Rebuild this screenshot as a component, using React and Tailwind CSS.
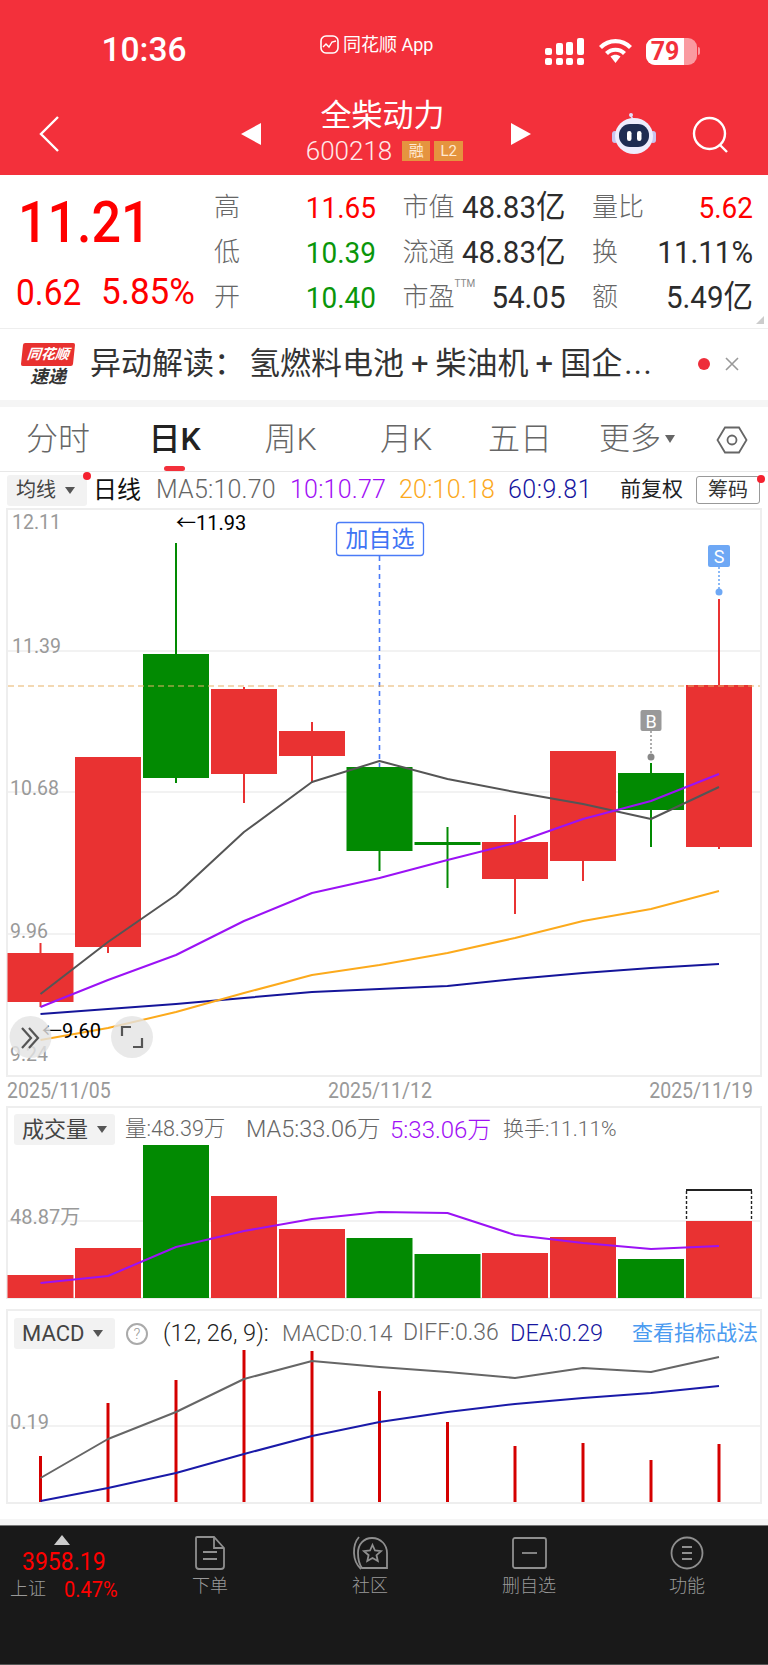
const xs = [40.5, 108, 176, 244, 312, 379.5, 447.5, 515, 583, 651, 719]
const RED = '#e93232'
const GREEN = '#028a02'

// [centro x, cuerpo arriba, cuerpo abajo, sombra arriba, sombra abajo, color]
const velas = [
  [40.5, 953, 1002, 943, 1007, RED],
  [108, 757, 947, 757, 953, RED],
  [176, 654, 778, 543, 783, GREEN],
  [244, 689, 774, 687, 803, RED],
  [312, 731, 756, 722, 783, RED],
  [379.5, 767, 851, 767, 871, GREEN],
  [447.5, 842, 845, 827, 888, GREEN],
  [515, 842, 879, 815, 914, RED],
  [583, 751, 861, 751, 881, RED],
  [651, 773, 810, 763, 847, GREEN],
  [719, 685, 847, 599, 849, RED],
]

const ma5 = [994, 942, 895, 832, 782, 761, 779, 792, 804, 819, 787]
const ma10 = [1007, 980, 955, 921, 893, 878, 860, 843, 819, 801, 774]
const ma20 = [1040, 1028, 1012, 993, 975, 965, 953, 938, 921, 909, 891]
const ma60 = [1014, 1009, 1004, 998, 992, 989, 986, 979, 973, 968, 964]

const volTops = [1275, 1248, 1145, 1196, 1229, 1238, 1254, 1253, 1237, 1259, 1221]
const volLine = [1283, 1276, 1247, 1231, 1219, 1212, 1213, 1235, 1243, 1249, 1246]

const macdTops = [1456, 1403, 1380, 1350, 1351, 1391, 1422, 1446, 1443, 1460, 1444]
const macdGris = [1478, 1439, 1412, 1379, 1361, 1367, 1372, 1378, 1368, 1372, 1357]
const macdAzul = [1501, 1488, 1473, 1454, 1436, 1422, 1412, 1404, 1398, 1393, 1386]

const puntos = ys => ys.map((y, i) => `${xs[i]},${y}`).join(' ')

const Linea = ({ ys, color, ancho = 2 }) => (
  <polyline points={puntos(ys)} fill="none" stroke={color} strokeWidth={ancho} strokeLinejoin="round" />
)

const Fila = ({ label, valor, color = 'text-[28px]' }) => (
  <div className="flex items-center justify-between">
    {label}
    <span className={`scale-y-[1.06] ${color}`}>{valor}</span>
  </div>
)

const Etiqueta = ({ children }) => <span className="text-[#666] text-[26px] font-light">{children}</span>

const Info = () => (
  <div className="h-[154px] bg-white border-b border-[#eee] flex relative">
    <div className="w-[214px] pl-[16px] pt-[12px]">
      <div className="text-[#f00] text-[52px] leading-[72px] font-medium pl-[2px] scale-y-[1.12] origin-center w-fit">11.21</div>
      <div className="text-[#f00] leading-[40px] mt-[14px] flex items-center">
        <span className="w-[85px] text-[33.5px] scale-y-[1.08]">0.62</span>
        <span className="text-[35px] scale-y-[1.04]">5.85%</span>
      </div>
    </div>
    <div className="pt-[10px] grid grid-cols-[162px_163px_161px] gap-x-[26.5px] auto-rows-[45px] text-[#2c2c2c] h-fit">
      <Fila label={<Etiqueta>高</Etiqueta>} valor="11.65" color="text-[28px] text-[#f00]" />
      <Fila label={<Etiqueta>市值</Etiqueta>} valor="48.83亿" color="text-[29.5px]" />
      <Fila label={<Etiqueta>量比</Etiqueta>} valor="5.62" color="text-[28px] text-[#f00]" />
      <Fila label={<Etiqueta>低</Etiqueta>} valor="10.39" color="text-[28px] text-[#0a960a]" />
      <Fila label={<Etiqueta>流通</Etiqueta>} valor="48.83亿" color="text-[29.5px]" />
      <Fila label={<Etiqueta>换</Etiqueta>} valor="11.11%" color="text-[29.5px]" />
      <Fila label={<Etiqueta>开</Etiqueta>} valor="10.40" color="text-[28px] text-[#0a960a]" />
      <Fila
        label={
          <span className="flex items-start">
            <Etiqueta>市盈</Etiqueta>
            <span className="text-[10px] text-[#888] leading-[14px] mt-[-1px]">TTM</span>
          </span>
        }
        valor="54.05"
        color="text-[29.5px]"
      />
      <Fila label={<Etiqueta>额</Etiqueta>} valor="5.49亿" color="text-[29.5px]" />
    </div>
    <div className="absolute right-[4px] bottom-[4px] w-0 h-0 border-l-[8px] border-l-transparent border-b-[8px] border-b-[#ccc]" />
  </div>
)

const Cabecera = () => (
  <div className="h-[175px] bg-[#f3303b] text-white">
    <div className="h-[100px] flex items-center relative">
      <div className="w-[288px] text-center text-[33.5px] font-medium">10:36</div>
      <div className="ml-[32px] -mt-[12px] flex items-center gap-[4px]">
        <svg width="19" height="19" viewBox="0 0 19 19">
          <rect x="1" y="1" width="17" height="17" rx="5" fill="none" stroke="#fff" strokeWidth="1.6" />
          <polyline points="3,12 6,9 9,12 12,7 16,6" fill="none" stroke="#fff" strokeWidth="1.4" />
        </svg>
        <span className="text-[18px]">同花顺 App</span>
      </div>
      <div className="absolute left-[545px] top-[38px] flex items-start">
        <svg width="40" height="27" viewBox="0 0 40 27">
          <g fill="#fff">
            <rect x="0" y="10" width="7" height="7" rx="2" />
            <rect x="11" y="5" width="7" height="12" rx="2" />
            <rect x="21" y="4" width="7" height="13" rx="2" />
            <rect x="32" y="0" width="7" height="17" rx="2" />
            <rect x="0" y="20" width="7" height="7" rx="2" />
            <rect x="11" y="20" width="7" height="7" rx="2" />
            <rect x="21" y="20" width="7" height="7" rx="2" />
            <rect x="32" y="20" width="7" height="7" rx="2" />
          </g>
        </svg>
        <svg className="ml-[13px]" width="35" height="25" viewBox="0 0 35 25">
          <path d="M2.5 9.5C11 1 24 1 32.5 9.5" fill="none" stroke="#fff" strokeWidth="4.2" />
          <path d="M8.5 15.5C13.5 10.5 21.5 10.5 26.5 15.5" fill="none" stroke="#fff" strokeWidth="4.2" />
          <path d="M12.5 18.5L17.5 25L22.5 18.5C19.5 16 15.5 16 12.5 18.5Z" fill="#fff" />
        </svg>
        <div className="ml-[13px] w-[51px] h-[27px] rounded-[9px] bg-[#fa9aa0] overflow-hidden">
          <div className="w-[38px] h-full bg-white text-[#f3303b] text-[25px] leading-[27px] font-bold text-center">79</div>
        </div>
        <div className="w-[2px] h-[8px] mt-[9px] ml-[1px] bg-[#fa9aa0] rounded-r" />
      </div>
    </div>
    <div className="h-[75px] flex relative">
      <svg className="absolute left-[38px] top-[15px]" width="24" height="38" viewBox="0 0 24 38">
        <polyline points="20,2 3,19 20,36" fill="none" stroke="#fff" strokeWidth="2.4" />
      </svg>
      <svg className="absolute left-[241px] top-[23px]" width="20" height="22" viewBox="0 0 20 22">
        <polygon points="20,0 0,11 20,22" fill="#fff" />
      </svg>
      <svg className="absolute left-[511px] top-[23px]" width="20" height="22" viewBox="0 0 20 22">
        <polygon points="0,0 20,11 0,22" fill="#fff" />
      </svg>
      <div className="w-full flex flex-col items-center">
        <div className="text-[31px] leading-[36px] -mt-[2px] -ml-[3px]">全柴动力</div>
        <div className="flex items-center mt-[2px] ml-[1px]">
          <span className="text-[26px] leading-[30px] font-light text-[#ffe9ea]">600218</span>
          <span className="ml-[10px] w-[28px] h-[20px] bg-[#e5943f] text-[#ffe9d2] text-[15px] leading-[20px] text-center">融</span>
          <span className="ml-[4px] w-[29px] h-[20px] bg-[#e5943f] text-[#ffe9d2] text-[15px] leading-[20px] text-center">L2</span>
        </div>
      </div>
      <svg className="absolute left-[612px] top-[13px]" width="44" height="41" viewBox="0 0 44 41">
        <path d="M22 7C19 4 18 2 19 1" fill="none" stroke="#dcd8f6" strokeWidth="1.6" />
        <circle cx="19" cy="2" r="2" fill="#e2defa" />
        <rect x="0" y="18" width="6" height="12" rx="3" fill="#c9c4ef" />
        <rect x="38" y="18" width="6" height="12" rx="3" fill="#c9c4ef" />
        <ellipse cx="22" cy="23" rx="19" ry="18" fill="#eeedfd" />
        <rect x="7" y="11" width="30" height="23" rx="11" fill="#1f2c52" />
        <rect x="15" y="18" width="4.5" height="10" rx="2.2" fill="#fff" />
        <rect x="25" y="18" width="4.5" height="10" rx="2.2" fill="#fff" />
      </svg>
      <svg className="absolute left-[692px] top-[16px]" width="38" height="38" viewBox="0 0 38 38">
        <circle cx="17.5" cy="17.5" r="15.5" fill="none" stroke="#fff" strokeWidth="2.4" />
        <line x1="28" y1="29" x2="35" y2="36" stroke="#fff" strokeWidth="2.4" />
      </svg>
    </div>
  </div>
)

const Mas = () => <span className="mx-[7px]">+</span>

const Aviso = () => (
  <div className="h-[71px] bg-white flex items-center relative">
    <div className="ml-[22px] w-[52px] flex flex-col items-center">
      <div className="w-[52px] h-[23px] bg-[#e8312f] -skew-x-6 rounded-[2px] text-white text-[14px] leading-[23px] text-center font-bold italic whitespace-nowrap">同花顺</div>
      <div className="text-[#333] text-[18px] leading-[21px] font-bold italic">速递</div>
    </div>
    <div className="ml-[16px] text-[#333] text-[31px] whitespace-nowrap flex">
      <span className="mr-[4px]">异动解读：</span>
      <span>氢燃料电池<Mas />柴油机<Mas />国企<span className="ml-[2px] tracking-[1.5px]">...</span></span>
    </div>
    <div className="absolute left-[698px] top-[29px] w-[12px] h-[12px] rounded-full bg-[#ee2d3a]" />
    <svg className="absolute left-[725px] top-[28px]" width="14" height="14" viewBox="0 0 14 14">
      <path d="M1 1L13 13M13 1L1 13" stroke="#999" strokeWidth="1.6" />
    </svg>
  </div>
)

const tabs = [
  { t: '分时', w: 116 },
  { t: '日K', w: 117, activo: true },
  { t: '周K', w: 115 },
  { t: '月K', w: 116 },
  { t: '五日', w: 112 },
]

const Pestanas = () => (
  <div className="h-[65px] bg-white border-b border-[#e8e8e8] flex items-center relative">
    {tabs.map(tab => (
      <div
        key={tab.t}
        style={{ width: tab.w }}
        className={`text-center text-[32px] -mt-[1px] ${tab.activo ? 'text-[#222] font-medium' : 'text-[#666] font-light'}`}
      >
        {tab.t}
      </div>
    ))}
    <div className="ml-[23px] flex items-center text-[31px] text-[#666] font-light">
      更多
      <div className="ml-[4px] w-0 h-0 border-x-[5px] border-x-transparent border-t-[8px] border-t-[#666]" />
    </div>
    <svg className="absolute left-[716px] top-[19px]" width="32" height="28" viewBox="0 0 32 28">
      <polygon points="9,1.5 23,1.5 30.5,14 23,26.5 9,26.5 1.5,14" fill="none" stroke="#666" strokeWidth="1.8" />
      <circle cx="16" cy="14" r="4.5" fill="none" stroke="#666" strokeWidth="1.8" />
    </svg>
    <div className="absolute left-[164px] bottom-0 w-[21px] h-[5px] rounded-full bg-[#f3303b]" />
  </div>
)

const Selector = ({ texto, className = '' }) => (
  <div className={`h-[31px] bg-[#f2f2f2] rounded-[3px] flex items-center text-[#444] ${className}`}>
    {texto}
    <div className="ml-[9px] w-0 h-0 border-x-[5px] border-x-transparent border-t-[7px] border-t-[#555]" />
  </div>
)

const Indicadores = () => (
  <div className="h-[36px] bg-white relative flex items-center whitespace-nowrap">
    <Selector texto="均线" className="ml-[7px] w-[80px] pl-[9px] text-[20px]" />
    <div className="absolute left-[83px] top-[0px] w-[8px] h-[8px] rounded-full bg-[#f5212f]" />
    <span className="ml-[6px] text-[24px] text-[#111]">日线</span>
    <span className="ml-[15px] w-[119px] text-[25px] tracking-[0.2px] text-[#666] font-light">MA5:10.70</span>
    <span className="ml-[15px] w-[94px] text-[25px] tracking-[0.2px] text-[#a10ff5] font-light">10:10.77</span>
    <span className="ml-[15px] w-[94px] text-[25px] tracking-[0.2px] text-[#fca91d] font-light">20:10.18</span>
    <span className="ml-[15px] w-[86px] text-[25px] tracking-[0.5px] text-[#1616a0] font-light">60:9.81</span>
    <span className="ml-[26px] text-[21px] text-[#222]">前复权</span>
    <div className="ml-[13px] w-[64px] h-[28px] border border-[#999] rounded-[3px] text-[20px] leading-[26px] text-center text-[#333]">筹码</div>
    <div className="absolute left-[757px] top-[3px] w-[8px] h-[8px] rounded-full bg-[#f5212f]" />
  </div>
)

const ValorEje = ({ x, y, children, color = '#999', size = 19.5 }) => (
  <text x={x} y={y} fontSize={size} fill={color} dominantBaseline="central">{children}</text>
)

const GraficoK = () => (
  <div className="ml-[6px] w-[756px] h-[569px] border-2 border-[#eee] bg-white">
    <svg className="block overflow-visible" width="752" height="565" viewBox="8 510 752 565">
      {[651, 792, 934].map(y => (
        <line key={y} x1="8" x2="760" y1={y} y2={y} stroke="#eee" strokeWidth="1.5" />
      ))}
      <line x1="379.5" x2="379.5" y1="556" y2="767" stroke="#4a7bf7" strokeWidth="1.6" strokeDasharray="5 4" />
      {velas.map(([x, a, b, top, low, color]) => (
        <g key={x}>
          <line x1={x} x2={x} y1={top} y2={low} stroke={color} strokeWidth="2" />
          <rect x={x - 33} y={a} width="66" height={b - a} fill={color} />
        </g>
      ))}
      <line x1="8" x2="760" y1="686" y2="686" stroke="#e8b267" strokeWidth="1.2" strokeDasharray="6 4" />
      <Linea ys={ma60} color="#15159a" />
      <Linea ys={ma20} color="#fcaa1c" />
      <Linea ys={ma5} color="#555" />
      <Linea ys={ma10} color="#9b12f5" />

      <ValorEje x="12" y="522">12.11</ValorEje>
      <ValorEje x="12" y="646">11.39</ValorEje>
      <ValorEje x="10" y="788">10.68</ValorEje>
      <ValorEje x="10" y="931">9.96</ValorEje>
      <ValorEje x="10" y="1054">9.24</ValorEje>
      <ValorEje x="176" y="523" color="#000" size={20}>←11.93</ValorEje>
      <ValorEje x="42" y="1031" color="#000" size={20}>←9.60</ValorEje>

      <rect x="336.5" y="522.5" width="87" height="33" rx="3" fill="#fff" stroke="#4a7bf7" strokeWidth="1.3" />
      <text x="380" y="539.5" fontSize="23" fill="#3f74f4" textAnchor="middle" dominantBaseline="central">加自选</text>

      <line x1="719" x2="719" y1="567" y2="590" stroke="#6ea8f5" strokeWidth="1.6" strokeDasharray="2 2" />
      <circle cx="719" cy="592" r="3.5" fill="#6ea8f5" />
      <rect x="708" y="545" width="22" height="22" rx="2" fill="#6ea8f5" />
      <text x="719" y="556" fontSize="18" fill="#fff" textAnchor="middle" dominantBaseline="central">S</text>

      <line x1="651" x2="651" y1="731" y2="755" stroke="#999" strokeWidth="1.6" strokeDasharray="2 2" />
      <circle cx="651" cy="757" r="3.5" fill="#888" />
      <rect x="640.5" y="710" width="21" height="21" rx="2" fill="#999" />
      <text x="651" y="721" fontSize="18" fill="#fff" textAnchor="middle" dominantBaseline="central">B</text>

      <circle cx="30.5" cy="1037" r="21" fill="#e4e4e4" fillOpacity="0.8" />
      <circle cx="132" cy="1037" r="21" fill="#e4e4e4" fillOpacity="0.8" />
      <path d="M22 1028L31 1038L22 1048M29 1028L38 1038L29 1048" fill="none" stroke="#555" strokeWidth="2.2" />
      <path d="M122 1036V1027H131M142 1038V1047H133" fill="none" stroke="#555" strokeWidth="2.2" />
    </svg>
  </div>
)

const Fechas = () => (
  <div className="h-[29px] pl-[7px] pr-[15px] flex justify-between text-[#999] text-[19.5px] leading-[28px]">
    <span className="scale-y-[1.15]">2025/11/05</span>
    <span className="scale-y-[1.15]">2025/11/12</span>
    <span className="scale-y-[1.15]">2025/11/19</span>
  </div>
)

const Volumen = () => (
  <div className="ml-[6px] w-[756px] h-[193px] border-2 border-[#eee] bg-white">
    <div className="h-[38px] pt-[5px] flex items-center whitespace-nowrap text-[#666] font-light">
      <Selector texto={<span className="font-normal text-[22px]">成交量</span>} className="ml-[6px] w-[101px] pl-[8px]" />
      <span className="ml-[10px] w-[108px] text-[21.5px]">量:48.39万</span>
      <span className="ml-[13px] w-[134px] text-[23.5px]">MA5:33.06万</span>
      <span className="ml-[10px] w-[100px] text-[24px] text-[#a10ff5]">5:33.06万</span>
      <span className="ml-[13px] text-[21px]">换手:11.11%</span>
    </div>
    <svg className="block overflow-visible" width="752" height="151" viewBox="8 1146 752 151">
      <line x1="8" x2="760" y1="1221" y2="1221" stroke="#eee" strokeWidth="1.5" />
      {volTops.map((top, i) => (
        <rect key={i} x={xs[i] - 33} y={top} width="66" height={1298 - top} fill={[2, 5, 6, 9].includes(i) ? GREEN : RED} />
      ))}
      <text x="10" y="1217" fontSize="20" fill="#999" dominantBaseline="central">48.87万</text>
      <line x1="686" x2="752" y1="1190" y2="1190" stroke="#222" strokeWidth="2" />
      <path d="M686.5 1191V1221M751.5 1191V1221" stroke="#222" strokeWidth="1.4" strokeDasharray="3 2" />
      <Linea ys={volLine} color="#9b12f5" />
    </svg>
  </div>
)

const Macd = () => (
  <div className="mt-[10px] ml-[6px] w-[756px] h-[195px] border-2 border-[#eee] bg-white">
    <div className="h-[39px] pt-[6px] flex items-center whitespace-nowrap text-[#666] font-light">
      <Selector texto={<span className="font-normal text-[22px]">MACD</span>} className="ml-[6px] w-[101px] pl-[8px]" />
      <div className="ml-[11px] w-[22px] h-[22px] rounded-full border-2 border-[#aaa] text-[#999] text-[15px] leading-[18px] text-center">?</div>
      <span className="ml-[15px] w-[108px] text-[23.5px] text-[#222]">(12, 26, 9):</span>
      <span className="ml-[11px] w-[110px] text-[22.5px]">MACD:0.14</span>
      <span className="ml-[11px] w-[96px] text-[23px]">DIFF:0.36</span>
      <span className="ml-[11px] w-[93px] text-[23.5px] text-[#1616a0]">DEA:0.29</span>
      <span className="ml-[29px] text-[#4b9bf0] text-[21px] font-normal">查看指标战法</span>
    </div>
    <svg className="block overflow-visible" width="752" height="152" viewBox="8 1350 752 152">
      <line x1="8" x2="760" y1="1426" y2="1426" stroke="#eee" strokeWidth="1.5" />
      {macdTops.map((top, i) => (
        <line key={i} x1={xs[i]} x2={xs[i]} y1={top} y2="1502" stroke="#d40000" strokeWidth="3" />
      ))}
      <text x="10" y="1422" fontSize="20" fill="#999" dominantBaseline="central">0.19</text>
      <Linea ys={macdGris} color="#666" />
      <Linea ys={macdAzul} color="#1a1aa8" />
    </svg>
  </div>
)

const BotonBarra = ({ left, texto, children }) => (
  <div className="absolute top-[10px] w-[70px] flex flex-col items-center" style={{ left }}>
    <div className="h-[34px] flex items-center">{children}</div>
    <span className="mt-[4px] text-[#999] text-[18px] leading-[24px] font-light whitespace-nowrap">{texto}</span>
  </div>
)

const BarraInferior = () => (
  <div className="h-[141px] bg-[#191919] border-t border-[#777] border-b-2 border-b-[#555] relative">
    <div className="absolute left-[54px] top-[9px] w-0 h-0 border-x-[8px] border-x-transparent border-b-[10px] border-b-[#ccc]" />
    <div className="absolute left-[22px] top-[22px] text-[#f00] text-[23px] leading-[28px] scale-y-[1.1]">3958.19</div>
    <div className="absolute left-[10px] top-[51px] text-[#999] text-[18px] leading-[24px] font-light">上证</div>
    <div className="absolute left-[64px] top-[50px] text-[#f00] text-[20px] leading-[26px] scale-y-[1.1]">0.47%</div>
    <BotonBarra left={175} texto="下单">
      <svg width="32" height="34" viewBox="0 0 32 34" fill="none" stroke="#8f8f8f" strokeWidth="1.8">
        <path d="M3 1H20L30 12V30C30 32 29 33 27 33H5C3 33 2 32 2 30V2C2 1.5 2.5 1 3 1Z" />
        <path d="M20 1V12H30M9 16H23M9 23H23" />
      </svg>
    </BotonBarra>
    <BotonBarra left={335} texto="社区">
      <svg width="38" height="34" viewBox="0 0 38 34" fill="none" stroke="#8f8f8f" strokeWidth="1.8">
        <path d="M8 1C1 9 1 25 10 33" />
        <path d="M11 32C8 28 7 24 7 17C7 8 13 2 21 2C30 2 36 9 36 17V32H11Z" />
        <path d="M21.5 9L24 14.5L30 15.2L25.5 19.2L26.8 25L21.5 22L16.3 25L17.6 19.2L13 15.2L19 14.5Z" />
      </svg>
    </BotonBarra>
    <BotonBarra left={494} texto="删自选">
      <svg width="35" height="32" viewBox="0 0 35 32" fill="none" stroke="#8f8f8f" strokeWidth="1.8">
        <rect x="1" y="1" width="33" height="30" rx="2" />
        <path d="M10 16H25" />
      </svg>
    </BotonBarra>
    <BotonBarra left={652} texto="功能">
      <svg width="34" height="34" viewBox="0 0 34 34" fill="none" stroke="#8f8f8f" strokeWidth="1.8">
        <ellipse cx="17" cy="17" rx="15.5" ry="15.5" />
        <path d="M12 11H22M12 17H22M12 23H22" />
      </svg>
    </BotonBarra>
  </div>
)

const App = () => {
  return (
    <div className="w-[768px] h-[1665px] overflow-hidden bg-white [font-family:Roboto,'Noto_Sans_CJK_SC',sans-serif]">
      <Cabecera />
      <Info />
      <Aviso />
      <div className="h-[7px] bg-[#f5f5f5]" />
      <Pestanas />
      <Indicadores />
      <GraficoK />
      <Fechas />
      <Volumen />
      <Macd />
      <div className="h-[15px] bg-white" />
      <div className="h-[6px] bg-[#f5f5f5]" />
      <BarraInferior />
    </div>
  )
}

export default App
